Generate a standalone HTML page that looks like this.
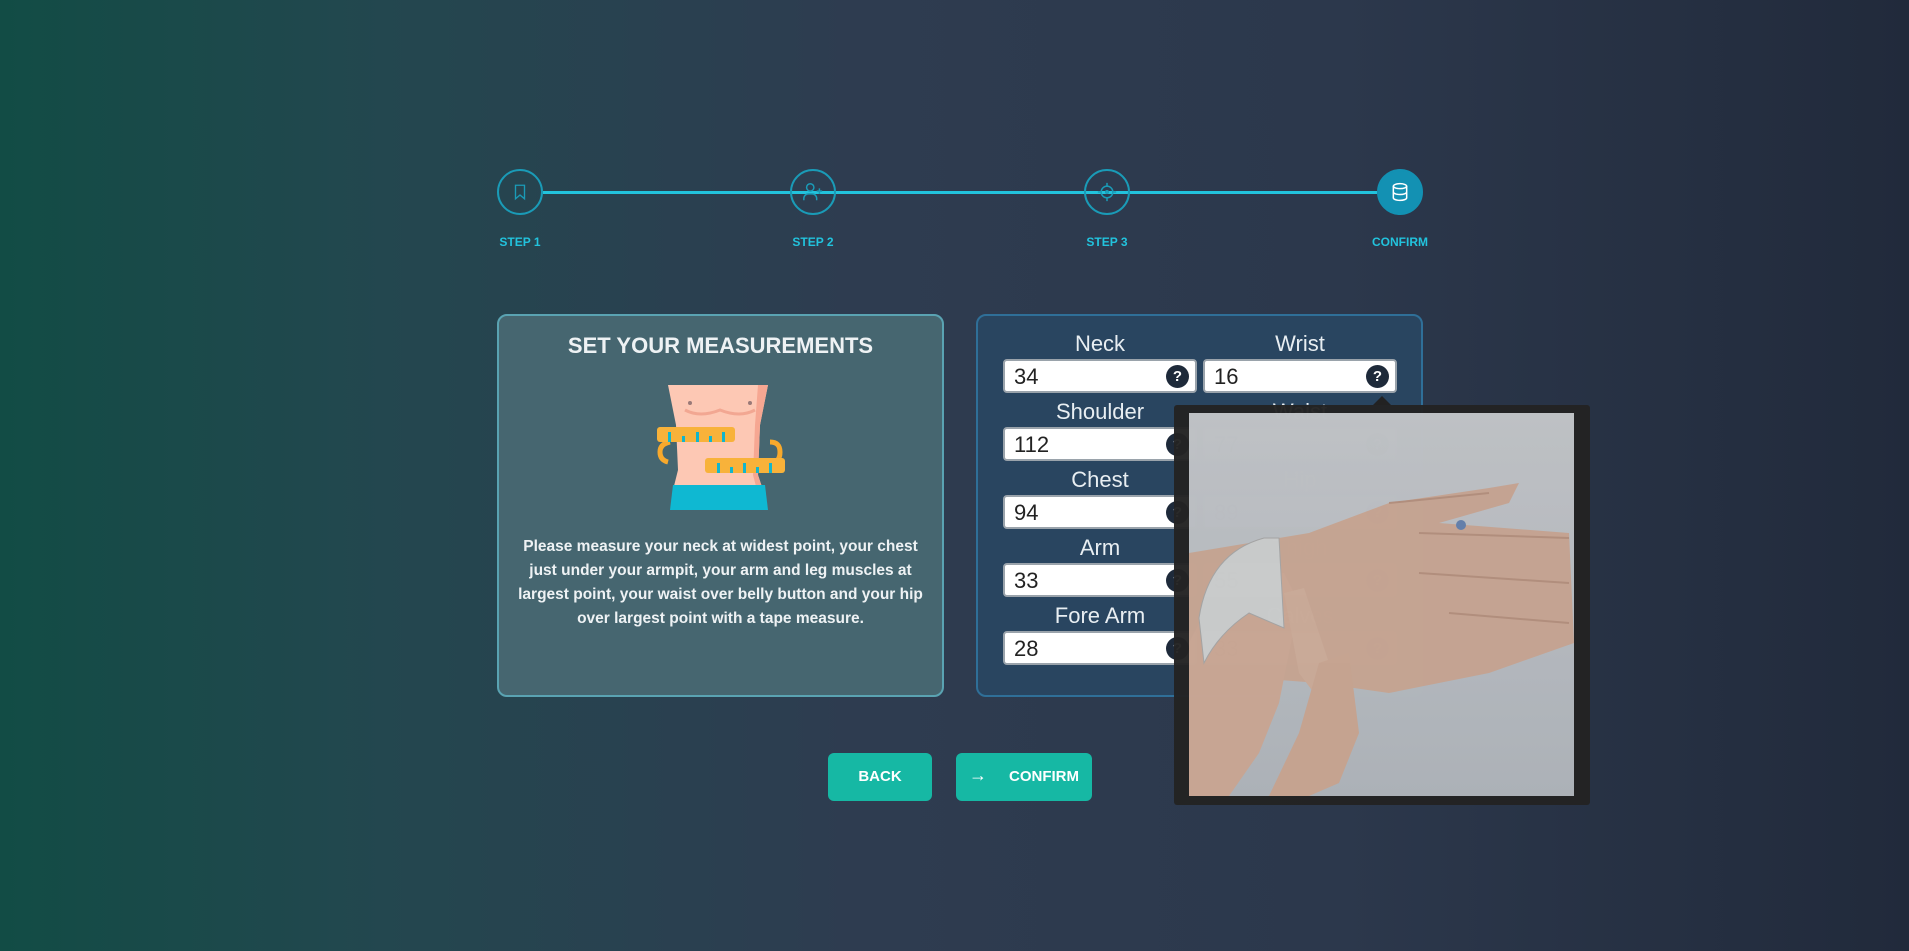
<!DOCTYPE html>
<html><head><meta charset="utf-8"><style>
*{box-sizing:border-box;margin:0;padding:0}
body{width:1909px;height:951px;overflow:hidden;font-family:"Liberation Sans",sans-serif;background:linear-gradient(90deg,#124c45 0%,#23474f 20%,#2e3c50 45%,#2c384c 70%,#212a3b 100%);position:relative}
.abs{position:absolute}
.line{position:absolute;top:191px;height:3px;background:#22c3dd}
.circ{position:absolute;width:46px;height:46px;border-radius:50%;border:2px solid #1a9bb7;top:169px;display:flex;align-items:center;justify-content:center}
.lbl{position:absolute;top:235px;font-size:12px;font-weight:bold;color:#22c3dd;width:100px;text-align:center}
.card{position:absolute;top:314px;height:383px;width:447px;border-radius:10px}
.fl{position:absolute;font-size:22px;color:#e8eef2;width:194px;text-align:center}
.in{position:absolute;width:194px;height:34px;background:#fff;border:2px solid #9aa3ab;border-radius:4px;font-size:22px;color:#222;padding:3px 9px}
.q{position:absolute;right:6px;top:4px;width:23px;height:23px;border-radius:50%;background:#1e2a3a;color:#fff;font-size:15px;font-weight:bold;text-align:center;line-height:23px}
.btn{position:absolute;top:753px;height:48px;background:#16b8a4;border-radius:6px;color:#fff;font-weight:bold;font-size:15px;display:flex;align-items:center;justify-content:center;line-height:20px}
</style></head><body>
<div class="line" style="left:543px;width:834px"></div>
<div class="circ" style="left:497px"><svg width="18" height="18" viewBox="0 0 24 24" fill="none" stroke="#1a9bb7" stroke-width="1.8"><path d="M6 3h12v18l-6-5-6 5z"/></svg></div>
<div class="circ" style="left:790px"><svg width="22" height="22" viewBox="0 0 24 24" fill="none" stroke="#1a9bb7" stroke-width="1.6"><circle cx="9" cy="7" r="4"/><path d="M2 21v-2a5 5 0 0 1 5-5h4a5 5 0 0 1 5 5v2M19 8v6M16 11h6"/></svg></div>
<div class="circ" style="left:1084px"><svg width="20" height="20" viewBox="0 0 24 24" fill="none" stroke="#1a9bb7" stroke-width="1.8"><circle cx="12" cy="12" r="7"/><circle cx="12" cy="12" r="1.5"/><path d="M12 1v4M12 19v4M1 12h4M19 12h4"/></svg></div>
<div class="circ" style="left:1377px;background:#1391b3;border-color:#1391b3"><svg width="20" height="20" viewBox="0 0 24 24" fill="none" stroke="#fff" stroke-width="1.8"><ellipse cx="12" cy="5" rx="8" ry="3"/><path d="M4 5v14c0 1.7 3.6 3 8 3s8-1.3 8-3V5M4 12c0 1.7 3.6 3 8 3s8-1.3 8-3"/></svg></div>
<div class="lbl" style="left:470px">STEP 1</div>
<div class="lbl" style="left:763px">STEP 2</div>
<div class="lbl" style="left:1057px">STEP 3</div>
<div class="lbl" style="left:1350px">CONFIRM</div>

<div class="card" style="left:497px;background:#466670;border:2px solid #5aa3b2"></div>
<div class="abs" style="left:497px;top:333px;width:447px;text-align:center;color:#eef2f4;font-size:22px;font-weight:bold">SET YOUR MEASUREMENTS</div>
<svg class="abs" style="left:640px;top:380px" width="160" height="135" viewBox="0 0 160 135">
<path d="M28 5h100l-8 40 -2 50 5 15H33l5-20 -2-45z" fill="#fdc8b4"/>
<path d="M118 5h10l-8 40-2 50 5 15h-6l-4-15 2-50z" fill="#f6a792"/>
<path d="M45 30q15 8 35 0q20 8 35 0" stroke="#f2a792" stroke-width="3" fill="none"/>
<circle cx="50" cy="23" r="2" fill="#9a7a78"/><circle cx="110" cy="23" r="2" fill="#9a7a78"/>
<path d="M33 105h92l3 25H30z" fill="#0fb8d2"/>
<path d="M30 62q-10 2-10 10t8 10" stroke="#f8a92c" stroke-width="5" fill="none"/>
<rect x="17" y="47" width="78" height="15" rx="3" fill="#f8b23a"/>
<path d="M130 62q10 0 10 10t-8 10" stroke="#f8a92c" stroke-width="5" fill="none"/>
<rect x="65" y="78" width="80" height="15" rx="3" fill="#f8b23a"/>
<g fill="#12b5cc"><rect x="28" y="52" width="3" height="10"/><rect x="42" y="56" width="3" height="6"/><rect x="56" y="52" width="3" height="10"/><rect x="69" y="56" width="3" height="6"/><rect x="82" y="52" width="3" height="10"/>
<rect x="77" y="83" width="3" height="10"/><rect x="90" y="87" width="3" height="6"/><rect x="103" y="83" width="3" height="10"/><rect x="116" y="87" width="3" height="6"/><rect x="129" y="83" width="3" height="10"/></g>
</svg>
<div class="abs" style="left:517px;top:535px;width:407px;text-align:center;color:#eef2f4;font-size:15.5px;font-weight:bold;line-height:24px">Please measure your neck at widest point, your chest just under your armpit, your arm and leg muscles at largest point, your waist over belly button and your hip over largest point with a tape measure.</div>

<div class="card" style="left:976px;background:#294560;border:2px solid #2f6f98"></div>
<div class="fl" style="left:1003px;top:331px">Neck</div><div class="in" style="left:1003px;top:359px">34<span class="q">?</span></div>
<div class="fl" style="left:1203px;top:331px">Wrist</div><div class="in" style="left:1203px;top:359px">16<span class="q">?</span></div>
<div class="fl" style="left:1003px;top:399px">Shoulder</div><div class="in" style="left:1003px;top:427px">112<span class="q">?</span></div>
<div class="fl" style="left:1203px;top:399px">Waist</div><div class="in" style="left:1203px;top:427px">77<span class="q">?</span></div>
<div class="fl" style="left:1003px;top:467px">Chest</div><div class="in" style="left:1003px;top:495px">94<span class="q">?</span></div>
<div class="fl" style="left:1203px;top:467px">Hip</div><div class="in" style="left:1203px;top:495px">89<span class="q">?</span></div>
<div class="fl" style="left:1003px;top:535px">Arm</div><div class="in" style="left:1003px;top:563px">33<span class="q">?</span></div>
<div class="fl" style="left:1203px;top:535px">Thigh</div><div class="in" style="left:1203px;top:563px">55<span class="q">?</span></div>
<div class="fl" style="left:1003px;top:603px">Fore Arm</div><div class="in" style="left:1003px;top:631px">28<span class="q">?</span></div>
<div class="fl" style="left:1203px;top:603px">Calves</div><div class="in" style="left:1203px;top:631px">33<span class="q">?</span></div>

<div class="abs" style="left:1373px;top:396px;width:0;height:0;border-left:9px solid transparent;border-right:9px solid transparent;border-bottom:9px solid #222"></div>
<div class="abs" style="left:1174px;top:405px;width:416px;height:400px;background:rgba(35,35,35,.97);border-radius:3px"></div>
<svg class="abs" style="left:1189px;top:413px;opacity:.86" width="385" height="383" viewBox="0 0 385 383">
<defs><linearGradient id="bg" x1="0" y1="0" x2="0" y2="1"><stop offset="0" stop-color="#d8dbdf"/><stop offset="1" stop-color="#c3c9d0"/></linearGradient></defs>
<rect width="385" height="383" fill="url(#bg)"/>
<path d="M0 140 L120 120 L200 90 L300 75 L330 70 L320 90 L250 110 L380 120 L385 230 L300 260 L200 280 L130 270 L0 260z" fill="#dfb9a4"/>
<path d="M200 90L300 80M230 120L380 125M230 160L380 170M260 200L380 210" stroke="#c9a08c" stroke-width="2" fill="none"/>
<path d="M20 190 L60 165 L95 160 L110 190 L90 290 L70 340 L40 383 L0 383 L0 230z" fill="#e2bba6"/>
<path d="M95 180 L115 175 L150 280 L140 300 L110 260z" fill="#e4bfaa"/>
<path d="M130 250 L160 240 L170 320 L150 370 L120 383 L80 383 L110 320z" fill="#e0b8a2"/>
<path d="M10 205 Q20 140 75 125 L90 125 L95 215 L60 200 Q30 220 15 250z" fill="#e4e6e6" stroke="#b8b8b8" stroke-width="1"/>
<circle cx="272" cy="112" r="5" fill="#6f8fc0"/>
</svg>
<div class="btn" style="left:828px;width:104px">BACK</div>
<div class="btn" style="left:956px;width:136px"><span style="margin-right:22px;font-weight:normal;font-size:18px;line-height:20px;position:relative;top:-2px">→</span>CONFIRM</div>
</body></html>
